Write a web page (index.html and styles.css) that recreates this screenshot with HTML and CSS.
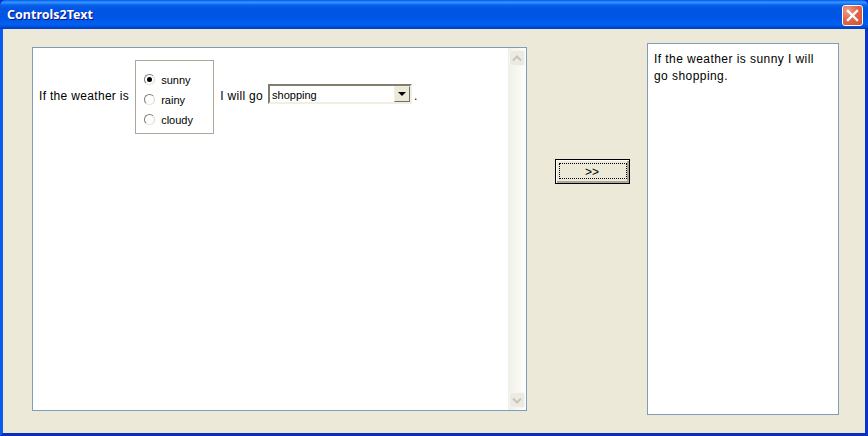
FILE: index.html
```html
<!DOCTYPE html>
<html lang="en">
<head>
    <meta charset="UTF-8">
    <title>Controls2Text</title>
    <link rel="stylesheet" href="styles.css">
</head>
<body>
    <div class="window">
        <div class="titlebar">
            <span class="title">Controls2Text</span>
            <div class="close-btn">
                <svg width="13" height="13" viewBox="0 0 13 13">
                    <path d="M2 2 L11 11 M11 2 L2 11" stroke="#fff" stroke-width="2.4" stroke-linecap="square"/>
                </svg>
            </div>
        </div>
        <div class="client">
            <div class="editor">
                <div class="editor-content">
                    <span class="label">If the weather is</span>
                    <div class="radio-group">
                        <div class="radio-row"><span class="radio checked"></span><span class="radio-text">sunny</span></div>
                        <div class="radio-row"><span class="radio"></span><span class="radio-text">rainy</span></div>
                        <div class="radio-row"><span class="radio"></span><span class="radio-text">cloudy</span></div>
                    </div>
                    <span class="label label-go">I will go</span>
                    <div class="combo">
                        <span class="combo-text">shopping</span>
                        <span class="combo-btn"><span class="combo-arrow"></span></span>
                    </div>
                    <span class="label label-dot">.</span>
                </div>
                <div class="scrollbar">
                    <div class="scroll-btn">
                        <svg width="10" height="7" viewBox="0 0 10 7"><path d="M1 5.5 L5 1.5 L9 5.5" fill="none" stroke="#c8c6ba" stroke-width="2"/></svg>
                    </div>
                    <div class="scroll-btn">
                        <svg width="10" height="7" viewBox="0 0 10 7"><path d="M1 1.5 L5 5.5 L9 1.5" fill="none" stroke="#c8c6ba" stroke-width="2"/></svg>
                    </div>
                </div>
            </div>
            <button class="convert-btn"><span class="btn-focus">&gt;&gt;</span></button>
            <div class="output">If the weather is sunny I will go shopping.</div>
        </div>
    </div>
</body>
</html>
```
FILE: styles.css
```css
html, body {
    margin: 0;
    padding: 0;
    height: 100%;
}
body {
    font-family: "Liberation Sans", Arial, sans-serif;
    font-size: 12px;
    color: #000;
    overflow: hidden;
}
.window {
    width: 868px;
    height: 436px;
    display: flex;
    flex-direction: column;
    background-color: #0831d9;
}
.titlebar {
    height: 29px;
    flex-shrink: 0;
    display: flex;
    justify-content: space-between;
    align-items: center;
    padding: 0 5px 0 7px;
    border-radius: 6px 6px 0 0;
    background: linear-gradient(to bottom, #0058ee 0, #3593ff 2px, #288eff 3px, #0a62e8 5px, #0055e5 9px, #0055e5 18px, #0060f0 24px, #0056e6 26px, #0042c8 28px, #003dc0 29px);
}
.title {
    font-family: "Noto Sans", Arial, sans-serif;
    font-weight: 700;
    font-size: 12.5px;
    color: #fff;
    text-shadow: 1px 1px 0 #0f1089;
}
.close-btn {
    width: 21px;
    height: 21px;
    margin-top: 2px;
    border: 1px solid #fff;
    border-radius: 3px;
    box-sizing: border-box;
    display: flex;
    align-items: center;
    justify-content: center;
    background: radial-gradient(circle at 25% 25%, #f0a08a 0, #e2664a 45%, #d34f2e 100%);
}
.client {
    flex-grow: 1;
    box-sizing: border-box;
    border-left: 3px solid #0a5cf0;
    border-right: 3px solid #0a33c8;
    border-bottom: 3px solid #0a2eb8;
    background-color: #ece9d8;
    display: flex;
    align-items: flex-start;
    padding-left: 29px;
}
.editor {
    width: 495px;
    height: 364px;
    flex-shrink: 0;
    box-sizing: border-box;
    margin-top: 18px;
    border: 1px solid #7f9db9;
    background-color: #fff;
    display: flex;
}
.editor-content {
    flex-grow: 1;
    display: flex;
    align-items: center;
    align-self: flex-start;
    padding: 12px 0 0 6px;
}
.label {
    padding-top: 2px;
    letter-spacing: 0.32px;
    white-space: nowrap;
}
.label-go {
    margin-left: 6px;
}
.label-dot {
    margin-left: 2px;
}
.radio-group {
    width: 79px;
    height: 74px;
    box-sizing: border-box;
    margin-left: 6px;
    margin-bottom: -4px;
    border: 1px solid #aca899;
    display: flex;
    flex-direction: column;
    padding: 10px 0 0 8px;
    gap: 4px;
    font-size: 11px;
}
.radio-row {
    display: flex;
    align-items: center;
    gap: 6px;
    height: 16px;
}
.radio-text {
    padding-top: 2px;
}
.radio {
    width: 11px;
    height: 11px;
    box-sizing: border-box;
    border-radius: 50%;
    border: 1px solid;
    border-color: #7f7d70 #dcdacd #e8e6da #7f7d70;
    background-color: #fff;
    display: flex;
    align-items: center;
    justify-content: center;
}
.radio.checked::after {
    content: "";
    width: 5px;
    height: 5px;
    border-radius: 50%;
    background-color: #000;
}
.combo {
    width: 144px;
    height: 20px;
    box-sizing: border-box;
    margin-left: 5px;
    margin-bottom: 2px;
    border: 2px solid;
    border-color: #817e70 #f1efe2 #f1efe2 #817e70;
    background-color: #fff;
    display: flex;
    align-items: center;
    justify-content: space-between;
    font-size: 11px;
}
.combo-text {
    padding: 2px 0 0 2px;
}
.combo-btn {
    width: 16px;
    height: 16px;
    box-sizing: border-box;
    background-color: #ece9d8;
    border: 1px solid;
    border-color: #f1efe2 #716f64 #716f64 #f1efe2;
    display: flex;
    align-items: center;
    justify-content: center;
}
.combo-arrow {
    width: 0;
    height: 0;
    border-left: 4px solid transparent;
    border-right: 4px solid transparent;
    border-top: 4px solid #000;
}
.scrollbar {
    width: 18px;
    flex-shrink: 0;
    box-sizing: border-box;
    padding: 2px 1px 2px 1px;
    display: flex;
    flex-direction: column;
    justify-content: space-between;
    background: linear-gradient(to right, #f0efe8, #fafaf5 70%, #fdfdfa);
}
.scroll-btn {
    height: 16px;
    box-sizing: border-box;
    border: 1px solid #f7f6ee;
    border-radius: 2px;
    background-color: #ecebe3;
    display: flex;
    align-items: center;
    justify-content: center;
}
.convert-btn {
    width: 75px;
    height: 25px;
    flex-shrink: 0;
    margin: 130px 17px 0 28px;
    padding: 3px 2px 4px 3px;
    box-sizing: border-box;
    border: 1px solid #000;
    background-color: #ece9d8;
    box-shadow: inset 1px 1px 0 #fff, inset -2px -2px 0 #aca899;
    font-family: "Liberation Sans", Arial, sans-serif;
    font-size: 12px;
    font-weight: 400;
    color: #000;
    display: flex;
}
.btn-focus {
    flex-grow: 1;
    box-sizing: border-box;
    padding: 2px 2px 0 0;
    border: 1px dotted #000;
    display: flex;
    align-items: center;
    justify-content: center;
}
.output {
    width: 192px;
    height: 372px;
    flex-shrink: 0;
    box-sizing: border-box;
    margin-top: 14px;
    border: 1px solid #7f9db9;
    background-color: #fff;
    padding: 7px 14px 0 6px;
    line-height: 17px;
    letter-spacing: 0.44px;
}
```
